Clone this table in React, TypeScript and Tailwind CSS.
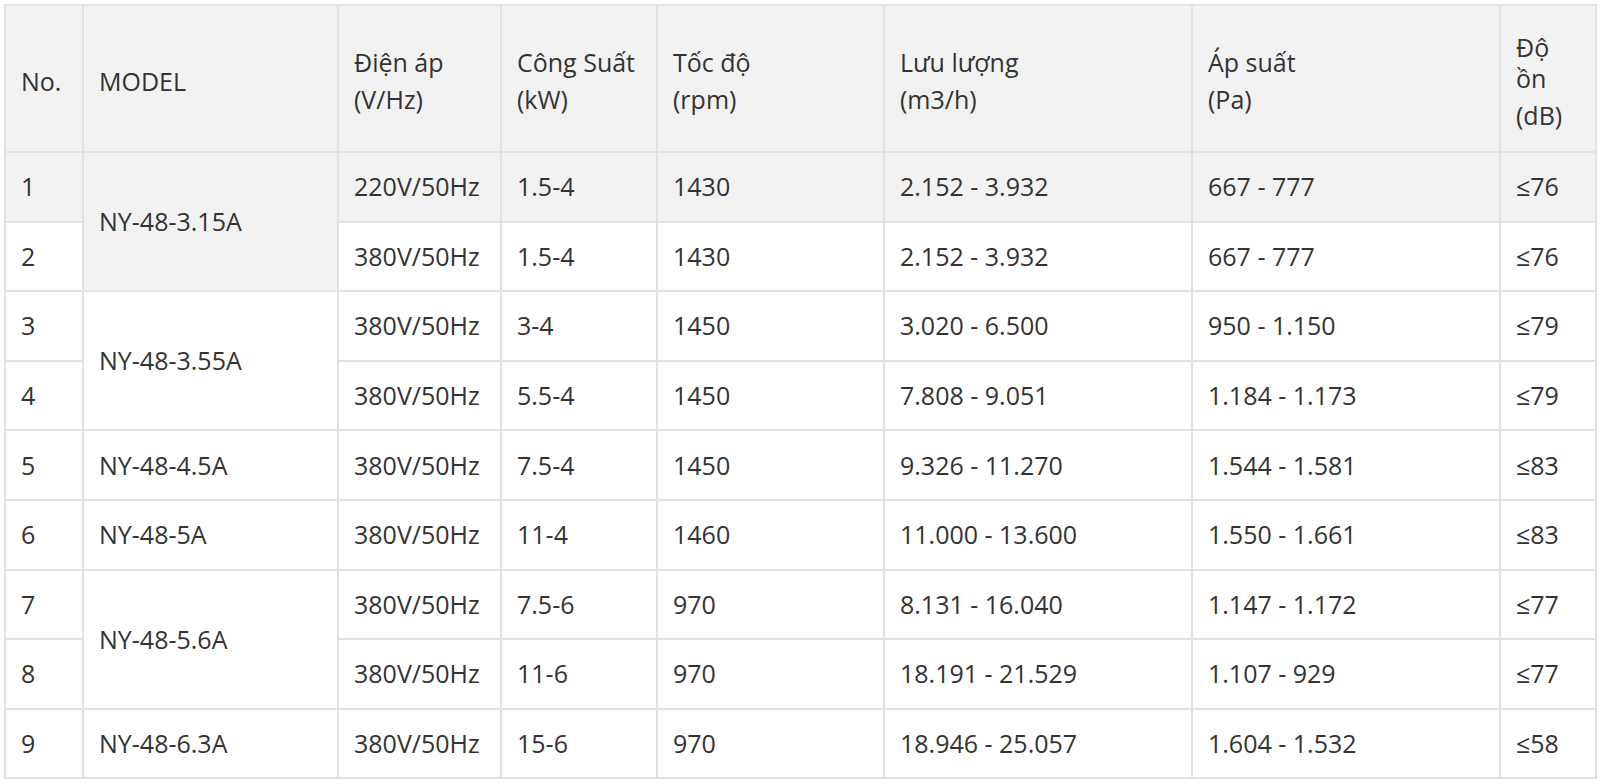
import React from "react";

type Row = {
  no: number;
  model?: string;
  span?: number;
  volt: string;
  power: string;
  speed: string;
  flow: string;
  pressure: string;
  noise: string;
  gray?: boolean;
};

const rows: Row[] = [
  { no: 1, model: "NY-48-3.15A", span: 2, volt: "220V/50Hz", power: "1.5-4", speed: "1430", flow: "2.152 - 3.932", pressure: "667 - 777", noise: "≤76", gray: true },
  { no: 2, volt: "380V/50Hz", power: "1.5-4", speed: "1430", flow: "2.152 - 3.932", pressure: "667 - 777", noise: "≤76" },
  { no: 3, model: "NY-48-3.55A", span: 2, volt: "380V/50Hz", power: "3-4", speed: "1450", flow: "3.020 - 6.500", pressure: "950 - 1.150", noise: "≤79" },
  { no: 4, volt: "380V/50Hz", power: "5.5-4", speed: "1450", flow: "7.808 - 9.051", pressure: "1.184 - 1.173", noise: "≤79" },
  { no: 5, model: "NY-48-4.5A", span: 1, volt: "380V/50Hz", power: "7.5-4", speed: "1450", flow: "9.326 - 11.270", pressure: "1.544 - 1.581", noise: "≤83" },
  { no: 6, model: "NY-48-5A", span: 1, volt: "380V/50Hz", power: "11-4", speed: "1460", flow: "11.000 - 13.600", pressure: "1.550 - 1.661", noise: "≤83" },
  { no: 7, model: "NY-48-5.6A", span: 2, volt: "380V/50Hz", power: "7.5-6", speed: "970", flow: "8.131 - 16.040", pressure: "1.147 - 1.172", noise: "≤77" },
  { no: 8, volt: "380V/50Hz", power: "11-6", speed: "970", flow: "18.191 - 21.529", pressure: "1.107 - 929", noise: "≤77" },
  { no: 9, model: "NY-48-6.3A", span: 1, volt: "380V/50Hz", power: "15-6", speed: "970", flow: "18.946 - 25.057", pressure: "1.604 - 1.532", noise: "≤58" },
];

const th = "border-2 border-[#e2e2e2] bg-[#f2f2f2] pl-[15px] pr-[6px] pt-[5px] text-left align-middle font-normal whitespace-nowrap";
const td = "border-2 border-[#e2e2e2] pl-[15px] pr-[6px] align-middle leading-[31px] whitespace-nowrap";

function Head({ a, b }: { a: React.ReactNode; b?: string }) {
  return (
    <div>
      <div className="leading-[31px]">{a}</div>
      {b && <div className="mt-[6px] leading-[31px]">{b}</div>}
    </div>
  );
}

export default function App() {
  return (
    <div className="bg-white w-[1600px] h-[784px] pt-[4px] pl-[4px]" style={{ fontFamily: '"Open Sans", "Noto Sans", sans-serif' }}>
      <table className="table-fixed border-collapse w-[1591px] text-[25px] text-[#333333]">
        <colgroup>
          <col className="w-[78px]" />
          <col className="w-[255px]" />
          <col className="w-[163px]" />
          <col className="w-[156px]" />
          <col className="w-[227px]" />
          <col className="w-[308px]" />
          <col className="w-[308px]" />
          <col className="w-[96px]" />
        </colgroup>
        <thead>
          <tr className="h-[147px]">
            <th className={th}><Head a="No." /></th>
            <th className={th}><Head a="MODEL" /></th>
            <th className={th}><Head a="Điện áp" b="(V/Hz)" /></th>
            <th className={th}><Head a="Công Suất" b="(kW)" /></th>
            <th className={th}><Head a="Tốc độ" b="(rpm)" /></th>
            <th className={th}><Head a="Lưu lượng" b="(m3/h)" /></th>
            <th className={th}><Head a="Áp suất" b="(Pa)" /></th>
            <th className={th}>
              <Head a={<><div>Độ</div><div>ồn</div></>} b="(dB)" />
            </th>
          </tr>
        </thead>
        <tbody>
          {rows.map((r) => {
            const bg = r.gray ? "bg-[#f2f2f2]" : "bg-white";
            return (
              <tr key={r.no} className="h-[69.6px]">
                <td className={`${td} ${bg}`}>{r.no}</td>
                {r.model && (
                  <td rowSpan={r.span} className={`${td} ${bg}`}>{r.model}</td>
                )}
                <td className={`${td} ${bg}`}>{r.volt}</td>
                <td className={`${td} ${bg}`}>{r.power}</td>
                <td className={`${td} ${bg}`}>{r.speed}</td>
                <td className={`${td} ${bg}`}>{r.flow}</td>
                <td className={`${td} ${bg}`}>{r.pressure}</td>
                <td className={`${td} ${bg}`}>{r.noise}</td>
              </tr>
            );
          })}
        </tbody>
      </table>
    </div>
  );
}
